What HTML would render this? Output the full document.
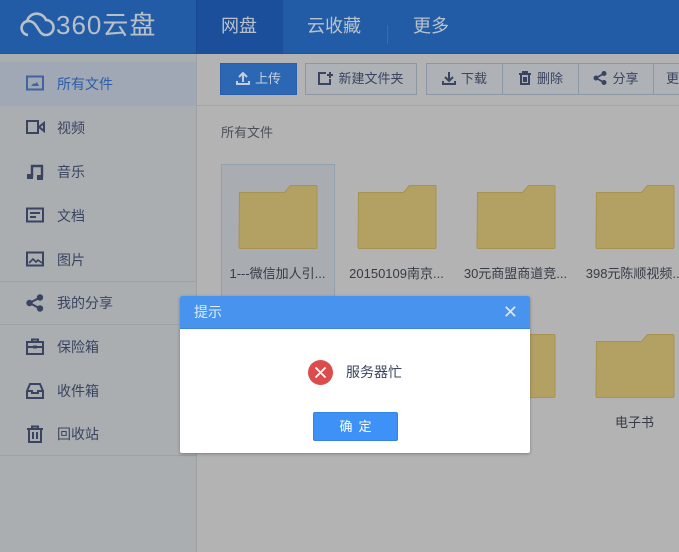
<!DOCTYPE html>
<html><head><meta charset="utf-8"><style>
*{margin:0;padding:0;box-sizing:border-box}
body{width:679px;height:552px;overflow:hidden;background:#b3b3b3;font-family:"Liberation Sans","Noto Sans CJK SC",sans-serif;position:relative}
.hd{position:absolute;left:0;top:0;width:679px;height:54px;background:#235ca6;border-bottom:1px solid #1f54a0}
.logo{position:absolute;left:18px;top:11px;color:#b8c0c8;font-size:26px;line-height:28px;letter-spacing:1px}
.tab{position:absolute;top:0;height:54px;line-height:52px;color:#b8c2cd;font-size:18px}
.side{position:absolute;left:0;top:54px;width:197px;height:498px;background:#aaaeb1;border-right:1px solid #9ea3a8}
.it{position:absolute;left:0;width:196px;height:44px;line-height:44px;font-size:14px;color:#3a4460;padding-left:57px}
.it svg{position:absolute;left:26px;top:13px}
.sep{position:absolute;left:0;width:196px;height:1px;background:#9da2a7}
.btn{position:absolute;top:63px;height:32px;line-height:30px;border:1px solid #8d97a4;background:#aeb1b5;font-size:13px;color:#3a4460;text-align:center}
.fd{position:absolute;width:80px;height:65px}
.lb{position:absolute;width:119px;text-align:center;font-size:13px;color:#363b46}
</style></head><body>
<div class="hd">
<div class="logo"><svg width="38" height="26" viewBox="0 0 36 26" style="vertical-align:-3px"><path d="M9 24a7 7 0 0 1-1-13.8A10 10 0 0 1 27 9a7.5 7.5 0 0 1 0 15c-5 0-7-5-9-8s-4-6-9-6" fill="none" stroke="#b8c0c8" stroke-width="2.6"/></svg>360云盘</div>
<div style="position:absolute;left:196px;top:0;width:87px;height:54px;background:#1c4f9b;border-left:1px solid #1a4a92"></div>
<div class="tab" style="left:221px">网盘</div>
<div class="tab" style="left:307px">云收藏</div>
<div style="position:absolute;left:387px;top:25px;width:1px;height:19px;background:#3a6ab0"></div>
<div class="tab" style="left:413px">更多</div>
</div>
<div class="side">
<div style="position:absolute;left:0;top:8px;width:196px;height:44px;background:#9fa8b4"></div>
</div>
<div class="it" style="top:62px;color:#2d5da8"><svg width="18" height="16"><rect x="1" y="1.5" width="16" height="13" fill="none" stroke="#3f64a4" stroke-width="2"/><path d="M5 11h8l-2-4-2 2-1-1z" fill="#3f64a4"/></svg>所有文件</div>
<div class="it" style="top:106px"><svg width="20" height="16"><rect x="1" y="2" width="11" height="12" fill="none" stroke="#3a4460" stroke-width="2"/><path d="M13 8l5-4v8z" fill="none" stroke="#3a4460" stroke-width="2"/></svg>视频</div>
<div class="it" style="top:150px"><svg width="18" height="18"><path d="M6 14V3h10v11" fill="none" stroke="#3a4460" stroke-width="2.4"/><rect x="1" y="11" width="6" height="5" fill="#3a4460"/><rect x="11" y="12" width="6" height="5" fill="#3a4460"/></svg>音乐</div>
<div class="it" style="top:194px"><svg width="18" height="16"><rect x="1" y="1.5" width="16" height="13" fill="none" stroke="#3a4460" stroke-width="2"/><path d="M4 6h10M4 10h6" stroke="#3a4460" stroke-width="2"/></svg>文档</div>
<div class="it" style="top:238px"><svg width="18" height="16"><rect x="1" y="1.5" width="16" height="13" fill="none" stroke="#3a4460" stroke-width="2"/><path d="M3 12l4-4 3 3 2-2 4 3" fill="none" stroke="#3a4460" stroke-width="1.6"/></svg>图片</div>
<div class="sep" style="top:281px"></div>
<div class="it" style="top:281px"><svg width="18" height="18"><circle cx="3.5" cy="9" r="3.2" fill="#3a4460"/><circle cx="14" cy="3.5" r="3.2" fill="#3a4460"/><circle cx="14" cy="14.5" r="3.2" fill="#3a4460"/><path d="M3.5 9L14 3.5M3.5 9L14 14.5" stroke="#3a4460" stroke-width="2"/></svg>我的分享</div>
<div class="sep" style="top:324px"></div>
<div class="it" style="top:325px"><svg width="18" height="17"><rect x="1" y="4" width="16" height="12" fill="none" stroke="#3a4460" stroke-width="2"/><path d="M6 4V1.5h6V4M1 9h16" stroke="#3a4460" stroke-width="2" fill="none"/><rect x="7" y="7.5" width="4" height="3" fill="#3a4460"/></svg>保险箱</div>
<div class="it" style="top:369px"><svg width="18" height="17"><path d="M1 9l3-7h10l3 7v7H1z M1 9h5v2h6V9h5" fill="none" stroke="#3a4460" stroke-width="2"/></svg>收件箱</div>
<div class="it" style="top:412px"><svg width="18" height="18"><path d="M1 4h16M6 4V1.5h6V4M3 4v13h12V4M7 7v7M11 7v7" fill="none" stroke="#3a4460" stroke-width="2"/></svg>回收站</div>
<div class="sep" style="top:455px"></div>

<div class="btn" style="left:220px;width:77px;background:#2b67b3;border-color:#2a5ea8;color:#c5cfdc"><svg width="14" height="14" style="vertical-align:-2px;margin-right:5px"><path d="M7 11V2M3 6l4-4 4 4M1 10v3h12v-3" fill="none" stroke="#c5cfdc" stroke-width="2"/></svg>上传</div>
<div class="btn" style="left:305px;width:112px"><svg width="15" height="14" style="vertical-align:-2px;margin-right:5px"><path d="M8 2H1v11h11V8" fill="none" stroke="#3a4460" stroke-width="2"/><path d="M12 1v6M9 4h6" stroke="#3a4460" stroke-width="2"/></svg>新建文件夹</div>
<div class="btn" style="left:426px;width:77px"><svg width="14" height="14" style="vertical-align:-2px;margin-right:5px"><path d="M7 1v9M3 6l4 4 4-4M1 10v3h12v-3" fill="none" stroke="#3a4460" stroke-width="2"/></svg>下载</div>
<div class="btn" style="left:502px;width:77px"><svg width="14" height="14" style="vertical-align:-2px;margin-right:5px"><path d="M1 3h12M5 3V1h4v2M3 3v10h8V3M6 6v5M8 6v5" fill="none" stroke="#3a4460" stroke-width="2"/></svg>删除</div>
<div class="btn" style="left:578px;width:76px"><svg width="14" height="14" style="vertical-align:-2px;margin-right:5px"><circle cx="3" cy="7" r="2.5" fill="#3a4460"/><circle cx="11" cy="2.5" r="2.5" fill="#3a4460"/><circle cx="11" cy="11.5" r="2.5" fill="#3a4460"/><path d="M3 7l8-4.5M3 7l8 4.5" stroke="#3a4460" stroke-width="1.6"/></svg>分享</div>
<div class="btn" style="left:653px;width:40px;text-align:left;padding-left:12px">更</div>
<div style="position:absolute;left:197px;top:105px;width:482px;height:1px;background:#a5a5a5"></div>
<div style="position:absolute;left:221px;top:122px;font-size:13px;color:#4a4f5a">所有文件</div>
<div style="position:absolute;left:221px;top:164px;width:114px;height:140px;border:1px solid #93a0ae;background:#a9adb1"></div>

<svg style="position:absolute;left:0;top:0" width="679" height="552">
<defs><path id="f" d="M1.5 8.5h45l6-7h25a1.5 1.5 0 0 1 1.5 1.5v60a1.5 1.5 0 0 1-1.5 1.5h-75a1.5 1.5 0 0 1-1.5-1.5z" fill="#b3a163" stroke="#a8924f" stroke-width="1"/></defs>
<use href="#f" x="238" y="184"/><use href="#f" x="357" y="184"/><use href="#f" x="476" y="184"/><use href="#f" x="595" y="184"/>
<use href="#f" x="476" y="333"/><use href="#f" x="595" y="333"/>
</svg>
<div class="lb" style="left:218px;top:263px">1---微信加人引...</div>
<div class="lb" style="left:337px;top:263px">20150109南京...</div>
<div class="lb" style="left:456px;top:263px">30元商盟商道竞...</div>
<div class="lb" style="left:575px;top:263px">398元陈顺视频...</div>
<div class="lb" style="left:456px;top:412px">备份</div>
<div class="lb" style="left:575px;top:412px">电子书</div>

<div style="position:absolute;left:180px;top:296px;width:350px;height:157px;background:#fff;border-radius:2px;box-shadow:0 1px 3px rgba(0,0,0,.3);overflow:hidden">
<div style="height:33px;background:#4893ee;border-bottom:1px solid #3b84e0;color:#e0ecfb;font-size:14px;line-height:32px;padding-left:14px">提示<span style="position:absolute;right:12px;top:0;font-size:18px;color:#d8e6f8">✕</span></div>
<svg style="position:absolute;left:128px;top:64px" width="25" height="25"><circle cx="12.5" cy="12.5" r="12.5" fill="#dc4c4c"/><path d="M7.5 7.5l10 10M17.5 7.5l-10 10" stroke="#fff" stroke-width="1.8"/></svg>
<div style="position:absolute;left:166px;top:66px;font-size:14px;color:#3a4460">服务器忙</div>
<div style="position:absolute;left:133px;top:116px;width:85px;height:29px;background:#3e92f7;border:1px solid #3583e4;border-radius:2px;color:#fff;font-size:13px;line-height:27px;text-align:center;letter-spacing:6px;padding-left:6px">确定</div>
</div>
</body></html>
